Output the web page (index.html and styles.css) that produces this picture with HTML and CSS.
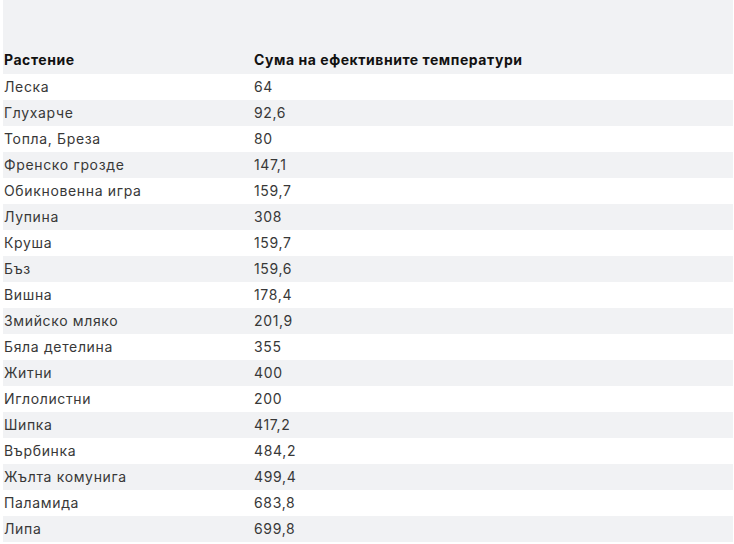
FILE: index.html
```html
<!DOCTYPE html>
<html lang="bg">
<head>
<meta charset="utf-8">
<link rel="stylesheet" href="styles.css">
</head>
<body>
<table class="data">
  <thead>
    <tr><th class="c1">Растение</th><th>Сума на ефективните температури</th></tr>
  </thead>
  <tbody>
    <tr><td>Леска</td><td>64</td></tr>
    <tr><td>Глухарче</td><td>92,6</td></tr>
    <tr><td>Топла, Бреза</td><td>80</td></tr>
    <tr><td>Френско грозде</td><td>147,1</td></tr>
    <tr><td>Обикновенна игра</td><td>159,7</td></tr>
    <tr><td>Лупина</td><td>308</td></tr>
    <tr><td>Круша</td><td>159,7</td></tr>
    <tr><td>Бъз</td><td>159,6</td></tr>
    <tr><td>Вишна</td><td>178,4</td></tr>
    <tr><td>Змийско мляко</td><td>201,9</td></tr>
    <tr><td>Бяла детелина</td><td>355</td></tr>
    <tr><td>Житни</td><td>400</td></tr>
    <tr><td>Иглолистни</td><td>200</td></tr>
    <tr><td>Шипка</td><td>417,2</td></tr>
    <tr><td>Върбинка</td><td>484,2</td></tr>
    <tr><td>Жълта комунига</td><td>499,4</td></tr>
    <tr><td>Паламида</td><td>683,8</td></tr>
    <tr><td>Липа</td><td>699,8</td></tr>
  </tbody>
</table>
</body>
</html>
```
FILE: styles.css
```css
html, body {
  margin: 0;
  padding: 0;
  background: #ffffff;
}
body {
  padding-left: 3px;
  font-family: "Inter", "DejaVu Sans", sans-serif;
}
.data {
  width: 730px;
  border-collapse: collapse;
  border-spacing: 0;
}
.data th {
  height: 74px;
  box-sizing: border-box;
  vertical-align: bottom;
  padding: 0 0 6px 1px;
  text-align: left;
  font-size: 14px;
  font-weight: 700;
  letter-spacing: 0.55px;
  color: #111111;
  background: #f1f2f4;
}
.data th.c1 {
  width: 250px;
}
.data td {
  height: 26px;
  box-sizing: border-box;
  padding: 0 0 1px 1px;
  font-size: 14px;
  letter-spacing: 0.65px;
  color: #383838;
  vertical-align: middle;
}
.data tbody tr:nth-child(even) td {
  background: #f1f2f4;
}
```
